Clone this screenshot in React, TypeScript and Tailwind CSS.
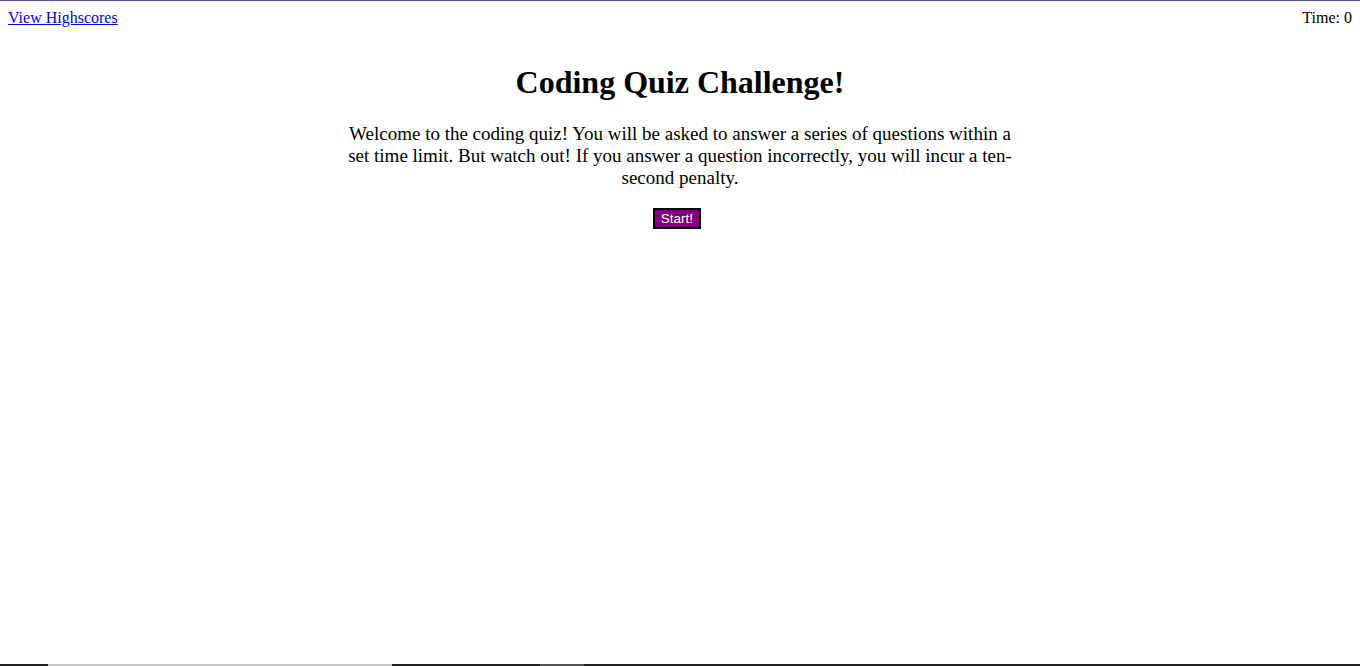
import React from "react";

export default function App() {
  return (
    <div className="relative h-[666px] w-[1360px] overflow-hidden bg-white border-t border-[#5b4f9c] font-['Liberation_Serif','Times_New_Roman',serif] text-black">
      <header className="flex justify-between px-2 pt-2 text-[16px] leading-[18px]">
        <a href="#" className="text-[#0000ee] underline">View Highscores</a>
        <span>Time: 0</span>
      </header>
      <main className="flex flex-col items-center">
        <h1 className="mt-[37px] text-[32px] font-bold leading-[37px]">Coding Quiz Challenge!</h1>
        <p className="mt-[22px] w-[680px] text-center text-[19px] leading-[22px]">
          Welcome to the coding quiz! You will be asked to answer a series of questions within a set time limit. But watch out! If you answer a question incorrectly, you will incur a ten-second penalty.
        </p>
        <button className="mr-[6px] mt-[19px] h-[21px] w-[48px] border-2 border-black bg-[#800080] font-['Liberation_Sans',Arial,sans-serif] text-[13.5px] leading-[15px] text-white">
          Start!
        </button>
      </main>
      <div className="absolute bottom-0 left-0 flex h-[2px] w-full">
        <div className="w-[48px] bg-[#222222]" />
        <div className="w-[344px] bg-[#c8c8c8]" />
        <div className="w-[148px] bg-[#222222]" />
        <div className="w-[44px] bg-[#555555]" />
        <div className="flex-1 bg-[#222222]" />
      </div>
    </div>
  );
}
